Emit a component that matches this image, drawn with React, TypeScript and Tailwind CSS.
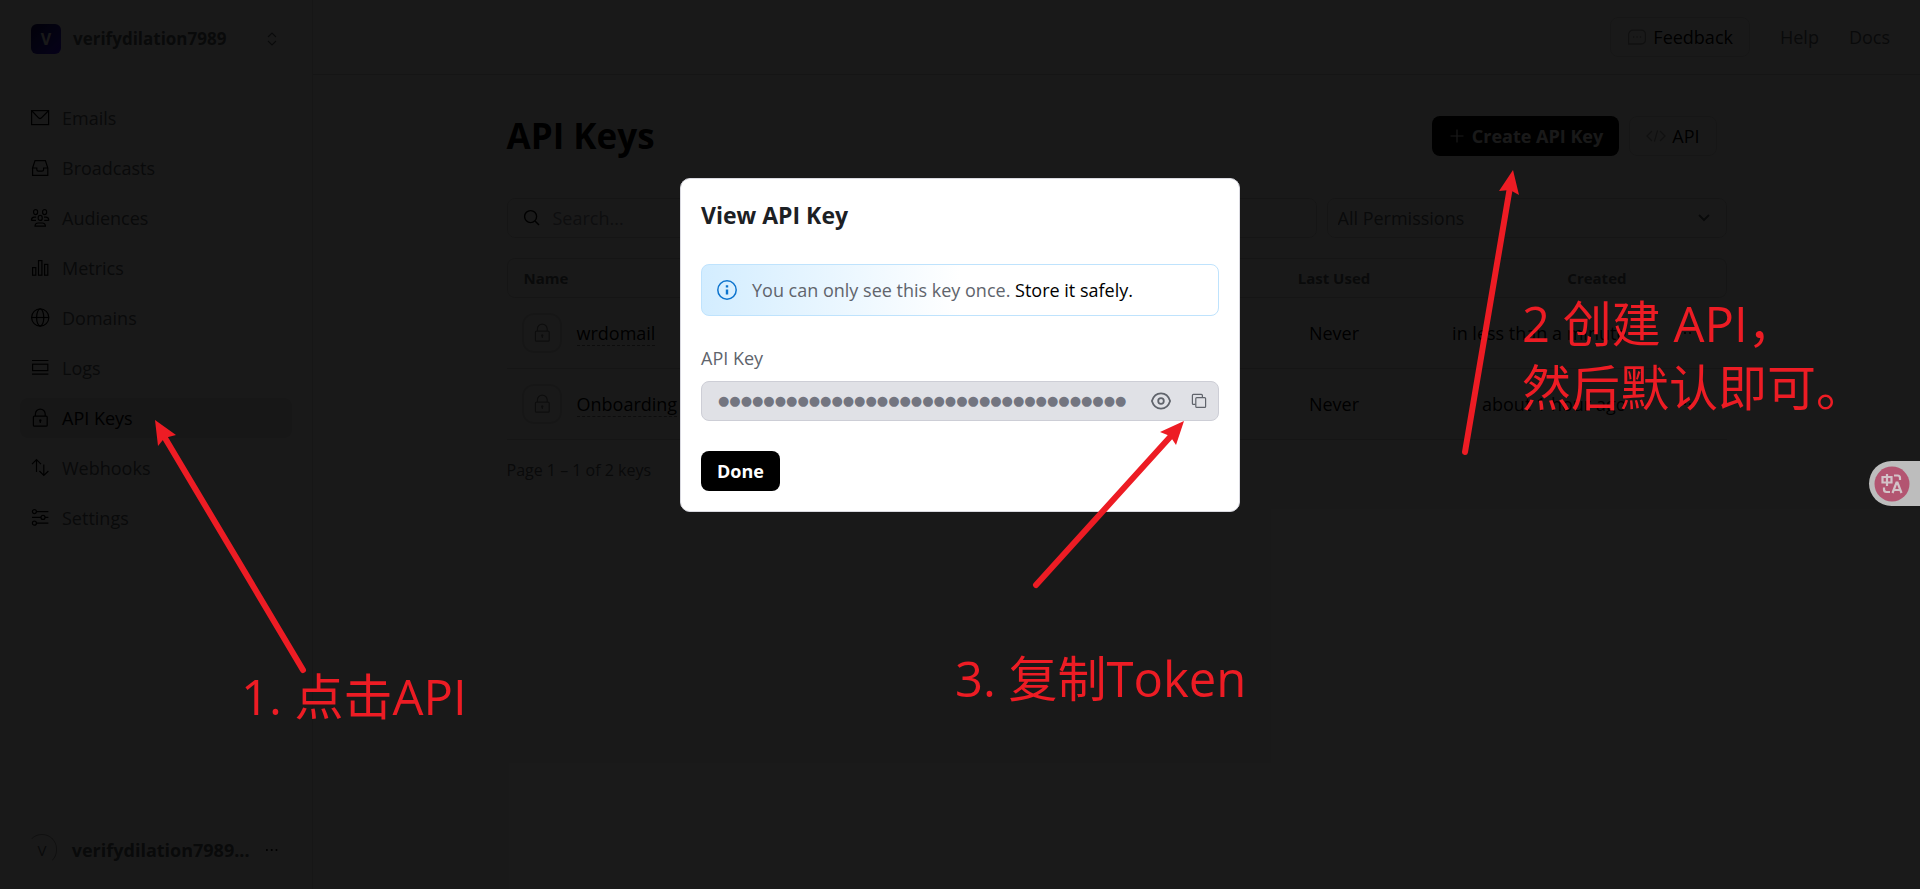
import React from 'react';

const iconPaths: Record<string, React.ReactNode> = {
    mail: (
        <>
            <rect x="1.6" y="2.6" width="17" height="14" />
            <path d="M2 3l6.6 6.8c.8.8 2 .8 2.8 0L18.2 3" />
        </>
    ),
    inbox: <path d="M2.6 10v7.4h15.2V10L15.4 2.6H5L2.6 10h4.2v1.6c0 1 .6 1.6 1.6 1.6h3.6c1 0 1.6-.6 1.6-1.6V10h4.2" />,
    users: (
        <>
            <rect x="3.6" y="1.6" width="4" height="5" rx="2" />
            <rect x="12.6" y="1.6" width="4" height="5" rx="2" />
            <rect x="8.2" y="7.4" width="4" height="5" rx="2" />
            <path d="M1.4 12.4c0-2 1-3.2 2.8-3.2h2M6 12.4H1.4M18.8 12.4c0-2-1-3.2-2.8-3.2h-2M14.2 12.4h4.6M5 18.2c0-2 1.2-3.2 3.2-3.2h4c2 0 3.2 1.2 3.2 3.2z" />
        </>
    ),
    bars: (
        <>
            <rect x="2.6" y="9.6" width="3.2" height="7.6" />
            <rect x="8.5" y="2.6" width="3.4" height="14.6" />
            <rect x="14.6" y="6.4" width="3.2" height="10.8" />
        </>
    ),
    globe: (
        <>
            <circle cx="10.2" cy="9.5" r="8.6" />
            <ellipse cx="10.2" cy="9.5" rx="3.6" ry="8.6" />
            <path d="M1.6 9.5h17.2" />
        </>
    ),
    logs: (
        <>
            <path d="M2 2.5h16.4M2 16.2h16.4" />
            <rect x="2.6" y="6.2" width="15.2" height="6.4" />
        </>
    ),
    lock: (
        <>
            <rect x="3.4" y="8.2" width="13.8" height="10" rx="1" />
            <path d="M5.4 8V6a4.9 4.9 0 0 1 9.8 0v2M10.3 12.4v2.6" />
            <circle cx="10.3" cy="12.4" r=".6" />
        </>
    ),
    arrows: <path d="M6.5 14V1.8M2 6.2l4.5-4.6L11 6.2M13.8 6.4v11M9.4 13l4.4 4.4 4.6-4.4" />,
    sliders: (
        <>
            <circle cx="4.4" cy="3.6" r="2" />
            <circle cx="13" cy="9.4" r="2" />
            <circle cx="4.4" cy="15.2" r="2" />
            <path d="M6.4 3.6h12M2 9.4h9M15 9.4h3.4M6.4 15.2h12" />
        </>
    ),
};

function Icon({ name, className = '' }: { name: string; className?: string }) {
    return (
        <svg viewBox="0 0 20 20" fill="none" stroke="currentColor" strokeWidth="1.2" className={`w-5 h-5 shrink-0 ${className}`}>
            {iconPaths[name]}
        </svg>
    );
}

const navItems = [
    { label: 'Emails', icon: 'mail' },
    { label: 'Broadcasts', icon: 'inbox' },
    { label: 'Audiences', icon: 'users' },
    { label: 'Metrics', icon: 'bars' },
    { label: 'Domains', icon: 'globe' },
    { label: 'Logs', icon: 'logs' },
    { label: 'API Keys', icon: 'lock' },
    { label: 'Webhooks', icon: 'arrows' },
    { label: 'Settings', icon: 'sliders' },
];

const keys = [
    { name: 'wrdomail', lastUsed: 'Never', created: 'in less than a minute' },
    { name: 'Onboarding', lastUsed: 'Never', created: 'about 1 hour ago' },
];

function Dots() {
    return (
        <svg viewBox="0 0 14 4" fill="currentColor" className="w-[14px] h-1">
            <circle cx="2" cy="2" r="1.1" />
            <circle cx="7" cy="2" r="1.1" />
            <circle cx="12" cy="2" r="1.1" />
        </svg>
    );
}

function Sidebar() {
    return (
        <aside className="w-[313px] shrink-0 flex flex-col border-r border-[#dcdcdc]">
            <button className="flex items-center gap-3 mt-5 ml-[31px] mr-[34px] h-[38px] text-left">
                <span className="w-[30px] h-[30px] rounded-md bg-linear-to-br from-[#10105c] to-[#4010ff] text-white text-base font-bold flex items-center justify-center">
                    V
                </span>
                <span className="flex-1 text-[17px] font-bold text-[#60646c]">verifydilation7989</span>
                <svg viewBox="0 0 12 14" fill="none" stroke="currentColor" strokeWidth="1.2" className="w-3 h-[14px] text-[#60646c]">
                    <path d="M2 5l4-4 4 4M2 9l4 4 4-4" />
                </svg>
            </button>

            <nav className="flex flex-col gap-[10px] px-5 mt-10">
                {navItems.map(item => (
                    <a
                        key={item.label}
                        href="#"
                        className={`flex items-center gap-3 h-10 px-[10px] rounded-lg ${item.label === 'API Keys' ? 'bg-[#e4e4e6] text-black' : 'text-[#60646c]'}`}
                    >
                        <Icon name={item.icon} className="text-black" />
                        {item.label}
                    </a>
                ))}
            </nav>

            <button className="flex items-center gap-[15px] mt-auto mb-6 ml-[27px] mr-[34px] text-left">
                <span className="w-[31px] h-[31px] rounded-full border border-transparent border-t-[#a0a0a0] border-r-[#a0a0a0] text-[15px] text-[#60646c] flex items-center justify-center">
                    V
                </span>
                <span className="flex-1 font-bold text-[#60646c]">verifydilation7989...</span>
                <Dots />
            </button>
        </aside>
    );
}

function TopBar() {
    return (
        <header className="h-[75px] shrink-0 flex items-center justify-end border-b border-[#d0d0d0] pr-[30px] text-[#60646c]">
            <button className="h-10 px-4 flex items-center gap-[6px] rounded-lg border border-[#dcdcdc] text-black">
                <svg viewBox="0 0 20 20" fill="none" stroke="#a0a0a0" strokeWidth="1.3" className="w-5 h-5">
                    <path d="M1.6 17V7.6c0-2.6 2-4.4 4.4-4.4h8c2.6 0 4.4 1.8 4.4 4.4v5c0 2.6-1.8 4.4-4.4 4.4z" />
                    <path d="M6 10h1.4M9.4 10h1.4M12.8 10h1.4" />
                </svg>
                Feedback
            </button>
            <a href="#" className="ml-[30px]">Help</a>
            <a href="#" className="ml-[30px]">Docs</a>
        </header>
    );
}

function KeysTable() {
    return (
        <table className="w-full table-fixed border-separate border-spacing-0 mt-5">
            <thead>
                <tr className="h-10 text-[15px] text-[#60646c]">
                    <th className="border border-r-0 border-[#d8d8d8] rounded-l-lg text-left font-bold px-4">Name</th>
                    <th className="w-[199px] border-y border-[#d8d8d8] font-bold">Last Used</th>
                    <th className="w-[209px] border-y border-[#d8d8d8] text-right font-bold pr-4">Created</th>
                    <th className="w-[84px] border border-l-0 border-[#d8d8d8] rounded-r-lg"></th>
                </tr>
            </thead>
            <tbody>
                {keys.map(key => (
                    <tr key={key.name} className="h-[71px] text-black">
                        <td className="border-b border-[#d0d0d0] pl-[15px]">
                            <div className="flex items-center gap-[15px]">
                                <span className="w-10 h-10 rounded-xl border-2 border-[#e0e0e0] flex items-center justify-center">
                                    <Icon name="lock" className="text-[#808080]" />
                                </span>
                                <a href="#" className="border-b border-dashed border-[#808080]">{key.name}</a>
                            </div>
                        </td>
                        <td className="border-b border-[#d0d0d0] text-center">{key.lastUsed}</td>
                        <td className="border-b border-[#d0d0d0] text-right pr-4 whitespace-nowrap">{key.created}</td>
                        <td className="border-b border-[#d0d0d0]">
                            <button aria-label="More" className="flex mx-auto"><Dots /></button>
                        </td>
                    </tr>
                ))}
            </tbody>
        </table>
    );
}

function KeysPage() {
    return (
        <main className="w-full max-w-[1220px] mx-auto pt-[35px]">
            <div className="flex items-center justify-between pr-[10px] pt-[6px]">
                <h1 className="text-[35px] leading-10 font-bold text-black">API Keys</h1>
                <div className="flex gap-[10px]">
                    <button className="h-10 px-4 flex items-center gap-[6px] rounded-lg bg-black text-white font-bold">
                        <svg viewBox="0 0 18 18" stroke="currentColor" strokeWidth="1.2" className="w-[18px] h-[18px]">
                            <path d="M9 2.5v13M2.5 9h13" />
                        </svg>
                        Create API Key
                    </button>
                    <button className="h-10 px-4 flex items-center gap-[6px] rounded-lg border border-[#dcdcdc] text-black">
                        <svg viewBox="0 0 20 20" fill="none" stroke="#a0a0a0" strokeWidth="1.3" className="w-5 h-5">
                            <path d="M6 5l-5 5 5 5M14 5l5 5-5 5M11.6 4.4L8.4 15.6" />
                        </svg>
                        API
                    </button>
                </div>
            </div>

            <div className="flex gap-[10px] mt-[42px]">
                <label className="flex-1 h-10 px-[15px] flex items-center gap-3 rounded-lg border border-[#d8d8d8]">
                    <svg viewBox="0 0 18 18" fill="none" stroke="black" strokeWidth="1.4" className="w-[18px] h-[18px]">
                        <circle cx="7.6" cy="7.6" r="6" />
                        <path d="M12 12l4 4" />
                    </svg>
                    <input aria-label="Search" placeholder="Search..." className="flex-1 bg-transparent outline-none placeholder:text-[#8b8d98]" />
                </label>
                <div className="relative w-[400px]">
                    <select aria-label="Permissions" className="w-full h-10 pl-[10px] pr-10 rounded-lg border border-[#d8d8d8] bg-transparent appearance-none text-[#60646c]">
                        <option>All Permissions</option>
                    </select>
                    <svg viewBox="0 0 14 10" fill="none" stroke="#60646c" strokeWidth="2" className="absolute right-4 top-[15px] w-[14px] h-[10px]">
                        <path d="M2 2l5 5 5-5" />
                    </svg>
                </div>
            </div>

            <KeysTable />
            <p className="mt-5 text-base leading-5 text-[#60646c]">Page 1 – 1 of 2 keys</p>
        </main>
    );
}

function ViewKeyDialog() {
    return (
        <div role="dialog" aria-labelledby="dialog-title" className="w-[560px] p-5 bg-white border border-[#d9d9e0] rounded-[10px]">
            <h2 id="dialog-title" className="text-[23px] leading-8 font-bold text-[#1c2024]">View API Key</h2>

            <div className="mt-[33px] h-[52px] px-[15px] flex items-center gap-[15px] rounded-lg border border-[#bfe3fd] bg-linear-to-r from-[#d3edff] to-white to-50% text-[#60646c]">
                <svg viewBox="0 0 20 20" fill="none" stroke="#0d74ce" className="w-5 h-5 shrink-0">
                    <circle cx="10" cy="10" r="9.2" strokeWidth="1.5" />
                    <path d="M10 9.4v5.2M10 5.2v2.2" strokeWidth="2.4" />
                </svg>
                <p>You can only see this key once. <span className="text-black">Store it safely.</span></p>
            </div>

            <label htmlFor="api-key" className="block mt-[30px] leading-6 text-[#60646c]">API Key</label>
            <div className="mt-[11px] h-10 pl-4 pr-1 flex items-center rounded-lg border border-[#cdced6] bg-[#e0e1e6] text-[#60646c]">
                <input
                    id="api-key"
                    readOnly
                    value={'●'.repeat(36)}
                    className="flex-1 min-w-0 bg-transparent outline-none font-['DejaVu_Sans',sans-serif] text-[13px] text-[#737580]"
                />
                <button aria-label="Show key" className="w-[30px] h-[30px] ml-1 flex items-center justify-center">
                    <svg viewBox="0 0 20 20" fill="none" stroke="currentColor" strokeWidth="1.8" className="w-5 h-5">
                        <path d="M.9 10C2.4 5.2 6 2.4 10 2.4S17.6 5.2 19.1 10C17.6 14.8 14 17.6 10 17.6S2.4 14.8.9 10z" />
                        <circle cx="10" cy="10" r="2.8" />
                    </svg>
                </button>
                <button aria-label="Copy key" className="w-[30px] h-[30px] ml-2 flex items-center justify-center">
                    <svg viewBox="0 0 16 16" fill="none" stroke="currentColor" strokeWidth="1.2" className="w-4 h-4">
                        <path d="M4.6 11.4H2.4c-.6 0-1-.4-1-1v-8c0-.6.4-1 1-1h8c.6 0 1 .4 1 1v2" />
                        <rect x="4.8" y="4.6" width="9.8" height="9.8" rx="1" />
                    </svg>
                </button>
            </div>

            <button className="mt-[30px] h-10 px-4 flex items-center rounded-lg bg-black text-white font-bold">Done</button>
        </div>
    );
}

// head is drawn as a filled barb, the tail is a round capped line
const arrows = [
    { head: '155,420 176,435 164.5,438 158,446', line: 'M165 438L303 670' },
    { head: '1513,170 1519,195 1510,190 1499,191', line: 'M1509.5 190L1465 452' },
    { head: '1184,421 1176,445 1170,436 1160,432', line: 'M1171 436L1036 585' },
];

function Annotations() {
    return (
        <div className="absolute inset-0 pointer-events-none text-[#ed1c24] text-[49px] leading-[64px] whitespace-nowrap">
            <svg className="absolute inset-0 w-full h-full">
                {arrows.map(a => (
                    <g key={a.line} fill="#ed1c24" stroke="#ed1c24">
                        <path d={a.line} strokeWidth="6" strokeLinecap="round" />
                        <polygon points={a.head} stroke="none" />
                    </g>
                ))}
            </svg>
            <p className="absolute left-[241px] top-[664px]">1. 点击API</p>
            <p className="absolute left-[1522px] top-[291px]">2 创建 API，<br />然后默认即可。</p>
            <p className="absolute left-[955px] top-[646px]">3. 复制Token</p>
        </div>
    );
}

function TranslateButton() {
    return (
        <button aria-label="Translate" className="absolute right-0 top-[461px] w-[51px] h-[45px] pl-[5px] flex items-center rounded-l-full bg-[#bdbdbd]">
            <svg viewBox="0 0 36 36" fill="none" stroke="#d3c3c8" strokeWidth="2.2" className="w-9 h-9">
                <circle cx="18" cy="18" r="17.5" fill="#b35571" stroke="none" />
                <path d="M8.5 11h9v5.500h-9zM13 8v12M20 9.500h3.500c1.500 0 2.500 1 2.500 2.500v2M10 21.500v2c0 1.500 1 2.500 2.500 2.500H16M18.500 27l4-10.500h1l4 10.500M20 24h6" />
            </svg>
        </button>
    );
}

export default function App() {
    return (
        <div className="relative min-h-screen bg-white overflow-hidden font-['Open_Sans','Noto_Sans_CJK_SC',sans-serif] text-lg leading-6">
            <div className="flex min-h-screen">
                <Sidebar />
                <div className="flex-1 flex flex-col">
                    <TopBar />
                    <KeysPage />
                </div>
            </div>

            <div className="absolute inset-0 flex justify-center items-start pt-[178px] bg-black/90">
                <ViewKeyDialog />
            </div>
            <TranslateButton />
            <Annotations />
        </div>
    );
}
